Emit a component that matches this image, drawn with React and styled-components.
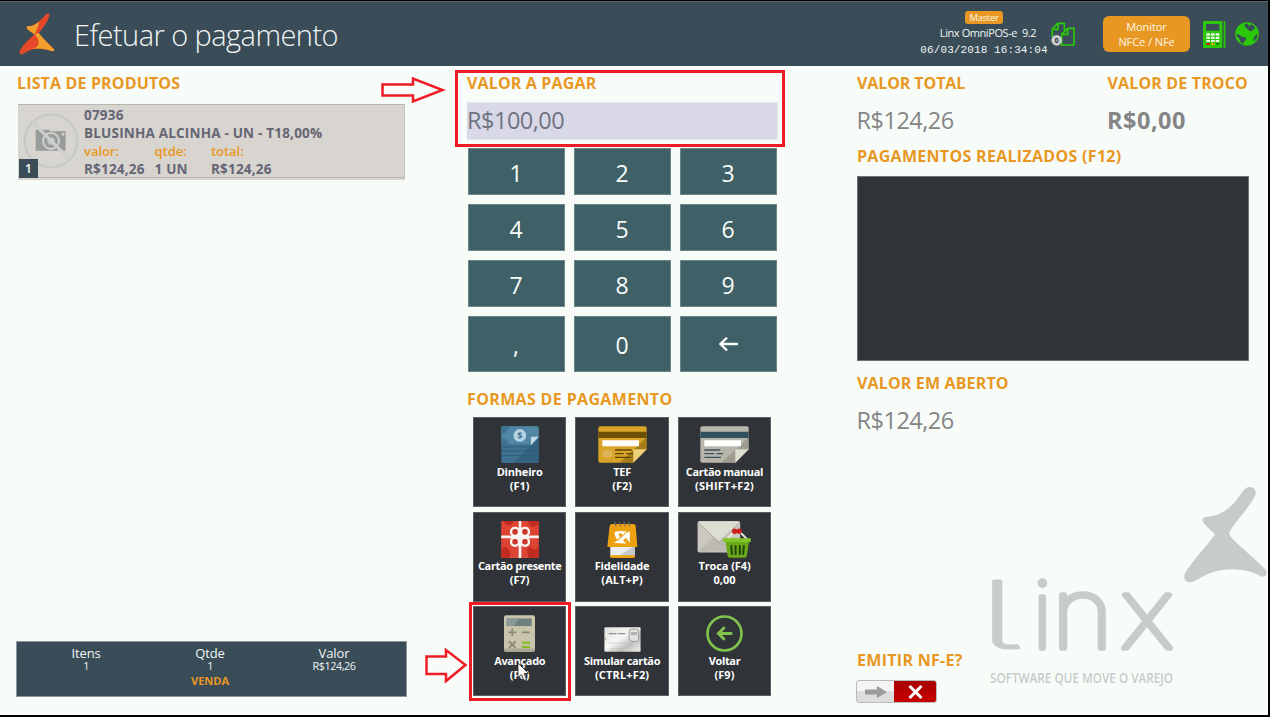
import React from 'react';
import styled, { createGlobalStyle } from 'styled-components';

const GlobalStyle = createGlobalStyle`
  * {
    box-sizing: border-box;
  }
  body {
    margin: 0;
    background: #000000;
    font-family: 'Open Sans', 'Noto Sans', sans-serif;
  }
`;

const Screen = styled.div`
  position: relative;
  display: flex;
  flex-direction: column;
  width: 1270px;
  height: 717px;
  border: solid #000000;
  border-width: 1px 2px 2px 0;
  background: #f7fcf9;
  overflow: hidden;
`;

const Header = styled.header`
  display: flex;
  align-items: center;
  flex: none;
  height: 65px;
  padding-left: 19px;
  border-top: 1px solid #5d666c;
  background: #394c57;
  color: #f1f5f4;
`;

const Title = styled.h1`
  flex: 1;
  margin: 2px 0 0 19px;
  font-size: 29px;
  font-weight: 300;
  line-height: 40px;
  letter-spacing: -0.56px;
`;

const Version = styled.div`
  display: flex;
  flex-direction: column;
  align-items: center;
  width: 128px;
  margin: -1px 3px 0 0;
  font-size: 11px;
  line-height: 16px;
  letter-spacing: -0.42px;
  white-space: pre;
`;

const Badge = styled.span`
  height: 13px;
  padding: 0 4px;
  border-radius: 3px;
  background: #e89822;
  color: #fdf6e4;
  font-size: 9.5px;
  line-height: 13px;
  letter-spacing: -0.3px;
`;

const VersionNumber = styled.span`
  padding: 1px 0 0 8px;
`;

const Clock = styled.span`
  margin-top: 2px;
  font-family: 'Liberation Mono', monospace;
  font-size: 11px;
  line-height: 14px;
  letter-spacing: 0.1px;
`;

const MonitorButton = styled.button`
  width: 87px;
  height: 36px;
  margin: 0 13px 0 27px;
  padding: 0 0 1px;
  border: none;
  border-radius: 6px;
  background: #e89822;
  color: #fdf6e4;
  font-family: inherit;
  font-size: 11px;
  line-height: 15px;
  letter-spacing: -0.08px;
`;

const GlobeSlot = styled.span`
  display: flex;
  margin: 0 9px 0 9px;
`;

const Main = styled.main`
  display: grid;
  grid-template-columns: 390px 311px 411px;
  column-gap: 60px;
  flex: 1;
  padding: 6px 0 0 17px;
`;

const Column = styled.section`
  display: flex;
  flex-direction: column;
  padding-left: ${p => p.$indent || 0}px;
`;

const Heading = styled.h2`
  height: 22px;
  margin: ${p => p.$top || 0}px 0 0;
  color: #e89822;
  font-size: 16px;
  font-weight: 700;
  line-height: 22px;
  letter-spacing: ${p => p.$spacing || 0.15}px;
  white-space: nowrap;
`;

const Amount = styled.div`
  height: 32px;
  margin: 9px 0 0 -0.5px;
  color: #858585;
  font-size: 23.5px;
  font-weight: ${p => (p.$bold ? 700 : 400)};
  line-height: 35px;
  letter-spacing: ${p => (p.$bold ? 0.5 : -0.5)}px;
`;

const Product = styled.article`
  position: relative;
  display: flex;
  width: 387px;
  height: 76px;
  margin: 10px 0 0 1px;
  border-top: 1px solid #b6b5b2;
  border-bottom: 2px solid #d8d4cf;
  background: #d8d4cf;
  box-shadow: inset 0 -1px #b6b5b2, inset -1px 0 #c9c6c2;
`;

const Thumb = styled.div`
  display: flex;
  width: 66px;
  padding: 8px 0 0 5px;
`;

const Position = styled.span`
  position: absolute;
  left: 1px;
  bottom: 0;
  width: 19px;
  height: 19px;
  background: #394c57;
  color: #ffffff;
  font-size: 12px;
  font-weight: 600;
  line-height: 20px;
  text-align: center;
`;

const ProductInfo = styled.div`
  color: #646674;
  font-size: 13.5px;
  font-weight: 700;
  line-height: 18.3px;
  letter-spacing: 0.2px;
  padding-top: 1px;
`;

const Figures = styled.dl`
  display: grid;
  grid-template-columns: 70.5px 56.5px auto;
  margin: 0;
`;

const FigureName = styled.dt`
  color: #e89822;
  font-size: 13px;
  font-weight: 600;
  line-height: 17.6px;
  letter-spacing: -0.05px;
`;

const FigureValue = styled.dd`
  margin: 0;
`;

const Summary = styled.footer`
  display: grid;
  grid-template-columns: repeat(3, 124px);
  align-content: start;
  height: 56px;
  margin: auto 0 18px -1px;
  padding: 3px 0 0 7px;
  border: 1px solid #8a979d;
  background: #394c57;
  color: #f1f5f4;
  text-align: center;
`;

const SummaryName = styled.div`
  font-size: 13px;
  line-height: 16px;
  letter-spacing: -0.1px;
`;

const SummaryValue = styled.div`
  font-size: 10.8px;
  line-height: 10.5px;
  letter-spacing: -0.45px;
`;

const Operation = styled.div`
  grid-column: 2;
  margin-top: 2px;
  color: #e89822;
  font-size: 11px;
  font-weight: 700;
  line-height: 14px;
`;

const AmountInput = styled.div`
  flex: none;
  height: 38px;
  margin-top: 8px;
  border: solid #e6e6ee;
  border-width: 1px 1px 1px 0;
  background: #d9d8e7;
  color: #6f7280;
  font-size: 23.5px;
  line-height: 35px;
  letter-spacing: -0.5px;
`;

const Keypad = styled.div`
  display: grid;
  grid-template-columns: repeat(3, 97px);
  grid-template-rows: 47px 47px 47px 56px;
  gap: 9px;
  margin: 8px 0 0 1px;
`;

const Key = styled.button`
  display: flex;
  align-items: center;
  justify-content: center;
  padding: 2px 1px 0 0;
  border: 1px solid #6c868a;
  background: #3f6066;
  color: #f7fcf9;
  font-family: inherit;
  font-size: 23px;
  line-height: 30px;
`;

const Methods = styled.div`
  display: grid;
  grid-template-columns: repeat(3, 93.4px);
  grid-auto-rows: 90px;
  gap: 4.5px 9px;
  margin: 7px 0 0 6px;
`;

const Method = styled.button`
  display: flex;
  flex-direction: column;
  align-items: center;
  padding: 0;
  border: 1px solid #5d6063;
  background: #303338;
  color: #ffffff;
  font-family: inherit;
  font-size: 11px;
  font-weight: 700;
  line-height: 14.3px;
`;

const MethodIcon = styled.span`
  display: flex;
  align-items: flex-end;
  height: 37.3px;
  margin: 8px 0 1.4px;
`;

const MethodName = styled.span`
  letter-spacing: ${p => p.$spacing || -0.34}px;
  white-space: nowrap;
`;

const Shortcut = styled.span`
  letter-spacing: ${p => p.$spacing || 0}px;
`;

const Totals = styled.div`
  display: grid;
  grid-template-columns: 250.5px auto;
`;

const PaymentList = styled.div`
  flex: none;
  height: 185px;
  margin-top: 9px;
  border: 1px solid #6f7275;
  background: #303338;
`;

const Toggle = styled.button`
  display: flex;
  width: 81px;
  height: 23px;
  margin: 9px 0 0 -1px;
  padding: 0;
  border: 1px solid #b9bcba;
  border-radius: 3px;
  background: linear-gradient(#f4f5f4 50%, #dcdedd 50%);
  overflow: hidden;
`;

const ToggleHandle = styled.span`
  display: flex;
  align-items: center;
  justify-content: center;
  width: 37px;
  height: 21px;
`;

const ToggleOff = styled.span`
  display: flex;
  align-items: center;
  justify-content: center;
  flex: 1;
  height: 21px;
  background: linear-gradient(#a80000, #c60000);
`;

const Watermark = styled.svg`
  position: absolute;
  left: 970px;
  top: 479px;
`;

const TailedLetter = styled.text`
  font-feature-settings: 'cv05' 1;
`;

const Callout = styled.div`
  position: absolute;
  left: ${p => p.$x}px;
  top: ${p => p.$y}px;
  width: ${p => p.$w}px;
  height: ${p => p.$h}px;
  border: 3px solid #ee1c25;
`;

const Pointer = styled.svg`
  position: absolute;
  left: ${p => p.$x}px;
  top: ${p => p.$y}px;
`;

const Logo = () => (
  <svg width="36" height="42" viewBox="59 38 108 126">
    <path d="M84 78 C104 78 122 62 138 44 C146 36 154 40 149 50 C142 70 130 84 118 98 C130 114 148 130 163 146 C168 152 162 154 154 151 C124 142 96 142 72 160 C62 165 58 158 62 150 C72 132 90 116 104 103 C98 96 90 92 84 86 C82 82 81 79 84 78 Z" fill="#e5492a" />
    <path d="M84 78 C98 79 110 72 120 64 C116 78 112 90 106 102 C98 96 90 92 84 86 C82 82 81 79 84 78 Z" fill="#f0a32c" />
    <path d="M106 102 L118 98 C130 114 148 130 163 146 C168 152 162 154 154 151 C138 146 118 142 100 146 C124 138 122 120 106 102 Z" fill="#f2a02b" />
  </svg>
);

const DocumentsIcon = () => (
  <svg width="25" height="25" viewBox="34 49 75 75">
    <g fill="none" stroke="#2bc90a" strokeWidth="5">
      <path d="M62 118 H103 V68 H84 L66 86 V118" />
      <path d="M84 68 V86 H66" />
      <path d="M38 94 V70 L54 53 H74 V74" />
      <path d="M55 53 V71 H38" />
    </g>
    <circle cx="51" cy="104" r="16" fill="#c9cdd2" />
    <text x="51" y="111" fontSize="20" fontWeight="700" textAnchor="middle" fill="#222222">0</text>
  </svg>
);

const TerminalIcon = () => (
  <svg width="23" height="27" viewBox="489 45 69 81">
    <path d="M489 45 H547 V126 H489 Z" fill="#2bc90a" />
    <path d="M498 54 H538 V74 H498 Z" fill="#394c57" />
    <path d="M551 45 H556 V126 H551 Z" fill="#2bc90a" />
    <g fill="#e8f5e4">
      <path d="M499 82 h11 v7 h-11z M513 82 h11 v7 h-11z M527 82 h11 v7 h-11z" />
      <path d="M499 92 h11 v7 h-11z M513 92 h11 v7 h-11z M527 92 h11 v7 h-11z" />
      <path d="M499 102 h11 v6 h-11z M513 102 h11 v6 h-11z M527 102 h11 v6 h-11z" />
    </g>
    <path d="M499 111 h11 v6 h-11z" fill="#d01818" />
    <path d="M513 111 h11 v6 h-11z" fill="#c8b400" />
    <path d="M527 111 h11 v6 h-11z" fill="#1c8a10" />
  </svg>
);

const GlobeIcon = () => (
  <svg width="24" height="24" viewBox="584 48 73 73">
    <circle cx="620.5" cy="84.500" r="36" fill="#2bc90a" />
    <path d="M612 58 L618 53 L626 54 L622 59 L629 60 L633 54 L641 60 L646 70 L640 69 L634 77 L626 74 L618 66 Z" fill="#394c57" />
    <path d="M589 84 L596 86 L604 92 L616 95 L618 102 L610 110 L608 116 L600 108 L597 98 L590 92 Z" fill="#394c57" />
    <path d="M647 88 L652 84 L651 96 L642 107 L640 98 Z" fill="#394c57" />
  </svg>
);

const NoPhotoIcon = () => (
  <svg width="56" height="56" viewBox="70 339 168 168">
    <path d="M108 389 H150 V394 H198 V452 H108 Z" fill="#989c9b" />
    <circle cx="154" cy="423" r="24" fill="none" stroke="#d0d1ce" strokeWidth="6" />
    <circle cx="154" cy="423" r="11" fill="#c5c8c6" />
    <circle cx="190" cy="403" r="4" fill="#d8d4cf" />
    <circle cx="154" cy="423" r="79" fill="none" stroke="#c6cac7" strokeWidth="7" />
    <path d="M98 366 L211 479" stroke="#cdd0cd" strokeWidth="9" />
  </svg>
);

const MoneyIcon = () => (
  <svg width="38" height="37" viewBox="124 50 113 110">
    <rect x="125" y="51" width="111" height="109" rx="5" fill="#3f7191" />
    <path d="M125 56 q0 -5 5 -5 h101 q5 0 5 5 v28 l-22 20 h-89 z" fill="#5187a5" />
    <path d="M125 51 h22 q-2 18 -22 22 z M125 104 v-20 q18 4 22 20 z" fill="#3f7191" />
    <circle cx="180" cy="78" r="19" fill="#b4d3e2" />
    <text x="180" y="88" fontSize="27" fontWeight="700" textAnchor="middle" fill="#3c6c8a">$</text>
    <path d="M236 84 V160 H160 Z" fill="#315c78" opacity="0.7" />
    <path d="M125 112 h109 M125 124 h109 M125 138 h109" stroke="#2f5a76" strokeWidth="2.500" />
    <path d="M213 82 H236 L213 107 Z" fill="#c4dce8" />
  </svg>
);

const CardIcon = ({ body, stripe, fold, ink, shade, chip }) => (
  <svg width="49" height="37" viewBox="413 50 147 111">
    <path d="M420 51 H554 q5 0 5 5 V120 L519 160 H420 q-6 0 -6 -6 V57 q0 -6 6 -6 z" fill={body} />
    <path d="M559 84 V120 L519 160 H478 Z" fill={shade} opacity="0.55" />
    <path d="M414 67 H559 V86 H414 Z" fill={stripe} />
    <path d="M426 93 H536 V111 H426 Z" fill="#ffffff" />
    {chip && <rect x="426" y="123" width="30" height="22" rx="10" fill="#dcb455" />}
    {chip
      ? <path d="M464 122 h50 M464 133 h26 M497 133 h22 M464 144 h48" stroke={ink} strokeWidth="4" />
      : <path d="M426 122 h48 M426 133 h30 M462 133 h20 M426 144 h50" stroke={ink} strokeWidth="4" />}
    <path d="M519 120 H559 L519 160 Z" fill={fold} />
  </svg>
);

const GiftIcon = () => (
  <svg width="38" height="37" viewBox="123 44 114 112">
    <rect x="123" y="44" width="114" height="112" rx="4" fill="#dd4433" />
    <path d="M123 130 q14 -14 24 2 q8 10 0 24 h-24 z M200 130 q14 -14 22 2 l15 -8 v32 h-30 z M205 44 q2 18 16 18 l16 -8 v-10 z M130 44 h30 q-8 20 -24 10 z" fill="#c02c22" />
    <path d="M123 92 H237 M180 44 V156" stroke="#f8f4f0" strokeWidth="8" />
    <g fill="#c9382c" stroke="#f8f4f0" strokeWidth="7">
      <rect x="153" y="65" width="24" height="24" rx="11" />
      <rect x="183" y="65" width="24" height="24" rx="11" />
      <rect x="153" y="95" width="24" height="24" rx="11" />
      <rect x="183" y="95" width="24" height="24" rx="11" />
    </g>
    <circle cx="180" cy="92" r="7" fill="#f8f4f0" />
  </svg>
);

const LoyaltyIcon = () => (
  <svg width="31" height="37" viewBox="441 44 92 112">
    <path d="M450 118 H524 V150 q0 5 -5 5 H455 q-5 0 -5 -5 z" fill="#e9edef" />
    <path d="M472 152 L518 122 H524 V152 Z" fill="#c4c9cc" />
    <path d="M449 148 H525 V150 q0 6 -6 6 H455 q-6 0 -6 -6 z" fill="#eda010" />
    <path d="M455 53 H520 q6 0 7 6 L532 123 H441 L448 59 q1 -6 7 -6 z" fill="#eda010" />
    <path d="M463 46 l4 14 M477 46 l4 14 M491 46 l4 14 M505 46 l4 14" stroke="#6e6f70" strokeWidth="3.500" />
    <path d="M463 77 Q480 72 500 76 L488 86 L480 80 L474 84 L480 92 L472 100 Q463 92 463 77 Z" fill="#ffffff" />
    <path d="M509 75 V110 L497 95 L488 104 Q496 108 498 112 Q478 112 460 110 Q478 102 490 88 Q500 78 509 75 Z" fill="#ffffff" />
  </svg>
);

const ExchangeIcon = () => (
  <svg width="54" height="37" viewBox="712 44 162 112">
    <rect x="713" y="45" width="129" height="94" rx="5" fill="#cbc9bf" />
    <path d="M715 136 L762 94 H794 L840 136 Z" fill="#bdbbb1" />
    <path d="M715 47 L778 107 L840 47 Q838 45 836 45 H719 Q716 45 715 47 Z" fill="#deddd4" />
    <path d="M715 49 L778 109 L840 49" fill="none" stroke="#a19f95" strokeWidth="2.500" />
    <path d="M822 78 L804 98 M842 78 L862 98" stroke="#e8e6dc" strokeWidth="6" />
    <circle cx="825" cy="75" r="8" fill="#cf2020" />
    <circle cx="839" cy="75" r="8" fill="#cf2020" />
    <path d="M797 104 H869 L862 150 q-1 5 -6 5 H810 q-5 0 -6 -5 z" fill="#69a91a" />
    <path d="M791 96 H874 V108 H791 Z" fill="#82c528" />
    <path d="M815 120 l2 24 M828 120 v24 M841 120 v24 M853 120 l-2 24" stroke="#24420c" strokeWidth="6" strokeLinecap="round" />
  </svg>
);

const CalculatorIcon = () => (
  <svg width="31" height="37" viewBox="254 51 94 111">
    <rect x="254" y="51" width="94" height="111" rx="6" fill="#c9c4ac" />
    <path d="M254 156 q0 6 6 6 H342 q6 0 6 -6 v-4 H254 z" fill="#aba792" />
    <path d="M262 61 H338 V84 H262 Z" fill="#6f807d" />
    <path d="M262 61 H300 L284 84 H262 Z" fill="#8a9996" />
    <path d="M279 91 v23 M267 103 h24 M308 103 h24" stroke="#8d8873" strokeWidth="5.500" />
    <path d="M269 130 l20 20 M289 130 l-20 20" stroke="#8d8873" strokeWidth="6" />
    <path d="M308 134 h25 M308 147 h25" stroke="#8abb2a" strokeWidth="7" />
  </svg>
);

const SilverCardIcon = () => (
  <svg width="37" height="25" viewBox="551 84 112 76">
    <defs>
      <linearGradient id="silver" x1="0" y1="0" x2="1" y2="1">
        <stop offset="0" stopColor="#e0e0de" />
        <stop offset="0.45" stopColor="#f6f6f5" />
        <stop offset="0.7" stopColor="#bfbfbd" />
        <stop offset="1" stopColor="#efefed" />
      </linearGradient>
    </defs>
    <rect x="552" y="85" width="110" height="74" rx="3" fill="url(#silver)" />
    <path d="M565 104 h24 M594 104 h22" stroke="#8f8f8e" strokeWidth="4" />
    <rect x="627" y="90" width="29" height="38" rx="9" fill="#e2e2e0" stroke="#999998" strokeWidth="3" />
    <path d="M632 99 h19 v10 h-19 z" fill="#b2b2b0" />
    <path d="M566 133 h54 M572 150 h34" stroke="#b7b7b5" strokeWidth="3" strokeDasharray="4 4" />
    <path d="M553 116 l5 4 -5 4 z" fill="#888888" />
  </svg>
);

const BackIcon = () => (
  <svg width="37" height="37" viewBox="859 52 111 111">
    <circle cx="914.500" cy="107.500" r="51" fill="none" stroke="#7fc24c" strokeWidth="8" />
    <path d="M938 107.500 H900 M915 89 L896 107.500 L915 126" fill="none" stroke="#7fc24c" strokeWidth="8.500" />
  </svg>
);

const BackspaceIcon = () => (
  <svg width="19" height="17" viewBox="777 441 57 51">
    <path d="M834 462 H782 M801 443 L781 462 L801 481" fill="none" stroke="#f7fcf9" strokeWidth="7" />
  </svg>
);

const keys = ['1', '2', '3', '4', '5', '6', '7', '8', '9', ',', '0'];

const methods = [
  { name: 'Dinheiro', nameSpacing: -0.2, shortcut: '(F1)', icon: <MoneyIcon /> },
  {
    name: 'TEF',
    shortcut: '(F2)',
    icon: <CardIcon body="#d9a528" stripe="#6d4f06" fold="#ecd07a" ink="#5f4708" shade="#7d5c0a" chip />,
  },
  {
    name: 'Cartão manual',
    shortcut: '(SHIFT+F2)',
    spacing: 0.24,
    icon: <CardIcon body="#b8b6ab" stripe="#33505f" fold="#dedfcf" ink="#38535f" shade="#88867c" />,
  },
  { name: 'Cartão presente', shortcut: '(F7)', icon: <GiftIcon /> },
  { name: 'Fidelidade', nameSpacing: -0.2, shortcut: '(ALT+P)', spacing: 0.1, icon: <LoyaltyIcon /> },
  { name: 'Troca (F4)', nameSpacing: -0.1, shortcut: '0,00', icon: <ExchangeIcon /> },
  { name: 'Avançado', shortcut: '(F6)', icon: <CalculatorIcon /> },
  { name: 'Simular cartão', shortcut: '(CTRL+F2)', spacing: 0.15, icon: <SilverCardIcon /> },
  { name: 'Voltar', shortcut: '(F9)', icon: <BackIcon /> },
];

const App = () => (
  <Screen>
    <GlobalStyle />
    <Header>
      <Logo />
      <Title>Efetuar o pagamento</Title>
      <Version>
        <Badge>Master</Badge>
        <VersionNumber>Linx OmniPOS-e  9.2</VersionNumber>
        <Clock>06/03/2018 16:34:04</Clock>
      </Version>
      <DocumentsIcon />
      <MonitorButton>Monitor<br />NFCe / NFe</MonitorButton>
      <TerminalIcon />
      <GlobeSlot><GlobeIcon /></GlobeSlot>
    </Header>

    <Main>
      <Column>
        <Heading>LISTA DE PRODUTOS</Heading>
        <Product>
          <Thumb><NoPhotoIcon /></Thumb>
          <Position>1</Position>
          <ProductInfo>
            <div>07936</div>
            <div>BLUSINHA ALCINHA - UN - T18,00%</div>
            <Figures>
              <FigureName>valor:</FigureName>
              <FigureName>qtde:</FigureName>
              <FigureName>total:</FigureName>
              <FigureValue>R$124,26</FigureValue>
              <FigureValue>1 UN</FigureValue>
              <FigureValue>R$124,26</FigureValue>
            </Figures>
          </ProductInfo>
        </Product>
        <Summary>
          <SummaryName>Itens</SummaryName>
          <SummaryName>Qtde</SummaryName>
          <SummaryName>Valor</SummaryName>
          <SummaryValue>1</SummaryValue>
          <SummaryValue>1</SummaryValue>
          <SummaryValue>R$124,26</SummaryValue>
          <Operation>VENDA</Operation>
        </Summary>
      </Column>

      <Column>
        <Heading>VALOR A PAGAR</Heading>
        <AmountInput>R$100,00</AmountInput>
        <Keypad>
          {keys.map(key => <Key key={key}>{key}</Key>)}
          <Key><BackspaceIcon /></Key>
        </Keypad>
        <Heading $top={16} $spacing={0.35}>FORMAS DE PAGAMENTO</Heading>
        <Methods>
          {methods.map(method => (
            <Method key={method.name}>
              <MethodIcon>{method.icon}</MethodIcon>
              <MethodName $spacing={method.nameSpacing}>{method.name}</MethodName>
              <Shortcut $spacing={method.spacing}>{method.shortcut}</Shortcut>
            </Method>
          ))}
        </Methods>
      </Column>

      <Column $indent={19}>
        <Totals>
          <div>
            <Heading $spacing={-0.1}>VALOR TOTAL</Heading>
            <Amount>R$124,26</Amount>
          </div>
          <div>
            <Heading>VALOR DE TROCO</Heading>
            <Amount $bold>R$0,00</Amount>
          </div>
        </Totals>
        <Heading $top={10} $spacing={0.3}>PAGAMENTOS REALIZADOS (F12)</Heading>
        <PaymentList />
        <Heading $top={11}>VALOR EM ABERTO</Heading>
        <Amount>R$124,26</Amount>
        <Heading $top={214} $spacing={0.3}>EMITIR NF-E?</Heading>
        <Toggle>
          <ToggleHandle>
            <svg width="22" height="12" viewBox="0 0 22 12">
              <path d="M0 3.500 H12 V0 L22 6 L12 12 V8.500 H0 Z" fill="#9a9d9b" />
            </svg>
          </ToggleHandle>
          <ToggleOff>
            <svg width="15" height="14" viewBox="0 0 15 14">
              <path d="M1.500 1 L13.500 13 M13.500 1 L1.500 13" stroke="#ffffff" strokeWidth="3" />
            </svg>
          </ToggleOff>
        </Toggle>
      </Column>
    </Main>

    <Watermark width="298" height="236" viewBox="0 0 894 708" fill="#c8ccc9">
      <path d="M835 22 C850 18 860 30 856 45 C845 75 790 130 777 160 C782 180 850 230 888 270 C895 285 885 293 872 289 C830 262 745 255 680 300 C660 313 640 305 643 288 C650 260 715 195 735 163 C725 150 700 135 697 120 C697 112 705 110 715 110 C770 105 800 60 815 38 Q825 24 835 22 Z" />
      <g stroke="#c8ccc9" strokeWidth="16" strokeLinejoin="round" fontFamily="Inter" fontWeight="100">
        <TailedLetter transform="translate(22 503) scale(2 1)" fontSize="278" strokeWidth="9">l</TailedLetter>
        <text x="187" y="503" fontSize="282">i</text>
        <text transform="translate(245 503) scale(1.08 1)" fontSize="292">n</text>
        <text transform="translate(452 503) scale(1.08 1)" fontSize="292">x</text>
      </g>
      <text x="60" y="608" fontSize="44" fontWeight="600" textLength="549" lengthAdjust="spacingAndGlyphs">SOFTWARE QUE MOVE O VAREJO</text>
    </Watermark>

    <Callout $x={455} $y={69} $w={330} $h={77} />
    <Callout $x={469} $y={601} $w={102} $h={99} />
    <Pointer $x={380} $y={75} width="66" height="28" fill="none" stroke="#ee1c25" strokeWidth="2.500">
      <path d="M2.500 8.500 H33 V2.500 L62.500 14 L33 25.500 V19.500 H2.500 Z" />
    </Pointer>
    <Pointer $x={424} $y={645} width="46" height="38" fill="none" stroke="#ee1c25" strokeWidth="2.500">
      <path d="M2.500 10.500 H22 V4 L41.500 19 L22 35 V28 H2.500 Z" />
    </Pointer>
    <Pointer $x={517} $y={661} width="13" height="20">
      <path d="M1 1 V15.500 L4.500 12.500 L7 18.500 L9.500 17.500 L7 11.500 H11.500 Z" fill="#ffffff" stroke="#2a2a2a" strokeWidth="0.800" />
    </Pointer>
  </Screen>
);

export default App;
